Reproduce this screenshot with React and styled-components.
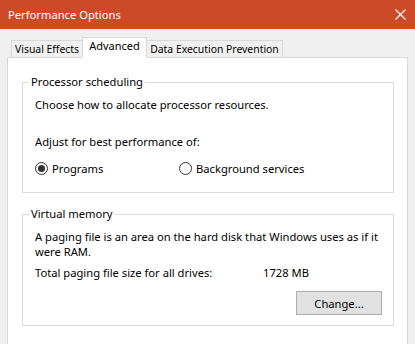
import styled, { createGlobalStyle } from 'styled-components';

const GlobalStyle = createGlobalStyle`
  html, body {
    margin: 0;
    padding: 0;
    background: #f0f0f0;
  }
  body {
    font-family: 'Noto Sans', 'Open Sans', sans-serif;
    font-size: 11.2px;
    color: #000;
  }
`;

const Window = styled.div`
  width: 415px;
  height: 344px;
  overflow: hidden;
  background: #f0f0f0;
`;

const TitleBar = styled.div`
  height: 29px;
  background: #cd4a29;
  color: #fff;
  display: flex;
  align-items: center;
  justify-content: space-between;
  padding: 0 8px;
`;

const CloseIcon = styled.svg`
  width: 11px;
  height: 11px;
  margin-right: 1px;
`;

const Body = styled.div`
  padding: 8px 7px 0 7px;
`;

const TabRow = styled.div`
  display: flex;
  align-items: flex-end;
  padding-left: 4px;
  position: relative;
  z-index: 1;
  margin-bottom: -1px;
`;

const Tab = styled.div`
  box-sizing: border-box;
  flex: none;
  width: ${({ $w }) => $w}px;
  height: ${({ $active }) => ($active ? '21px' : '18px')};
  margin: 0 ${({ $active }) => ($active ? '-1px' : '0')};
  background: ${({ $active }) => ($active ? '#fff' : '#f0f0f0')};
  border: 1px solid #d9d9d9;
  border-bottom: ${({ $active }) => ($active ? '1px solid #fff' : '1px solid #d9d9d9')};
  display: flex;
  justify-content: center;
  align-items: ${({ $active }) => ($active ? 'flex-start' : 'center')};
  font-size: ${({ $active }) => ($active ? '11px' : '10.4px')};
  line-height: 16px;
  white-space: nowrap;
  position: relative;
  z-index: ${({ $active }) => ($active ? 2 : 1)};
`;

const Panel = styled.div`
  background: #fff;
  border: 1px solid #d9d9d9;
  height: 320px;
  padding: 16px 13px 0 14px;
`;

const Group = styled.fieldset`
  margin: 0 0 ${({ $after }) => $after || 0}px 0;
  padding: 7px 11px ${({ $bottom }) => $bottom}px 12px;
  border: 1px solid #dcdcdc;
  min-width: 0;
`;

const Legend = styled.legend`
  padding: 0 2px;
  margin-left: -6px;
  line-height: 16px;
`;

const Line = styled.div`
  line-height: ${({ $lh }) => $lh || 16}px;
  margin-top: ${({ $gap }) => $gap || 0}px;
  white-space: nowrap;
`;

const RadioRow = styled.div`
  display: flex;
  align-items: center;
  margin-top: 10px;
  height: 16px;
`;

const RadioOption = styled.label`
  display: flex;
  align-items: center;
  gap: 4px;
  width: ${({ $w }) => $w}px;
`;

const RadioCircle = styled.span`
  width: 11px;
  height: 11px;
  border-radius: 50%;
  border: 1px solid #333;
  display: flex;
  align-items: center;
  justify-content: center;
  &::after {
    content: '';
    width: 7px;
    height: 7px;
    border-radius: 50%;
    background: ${({ $checked }) => ($checked ? '#333' : 'transparent')};
  }
`;

const SizeRow = styled.div`
  display: grid;
  grid-template-columns: 228px 1fr;
  line-height: 16px;
  margin-top: 6px;
`;

const ButtonRow = styled.div`
  display: flex;
  justify-content: flex-end;
  margin-top: 10px;
`;

const Button = styled.button`
  width: 86px;
  height: 24px;
  background: #e1e1e1;
  border: 1px solid #adadad;
  font-family: inherit;
  font-size: inherit;
  color: #000;
  padding: 0;
`;

const App = () => {
  return (
    <Window>
      <GlobalStyle />
      <TitleBar>
        <span>Performance Options</span>
        <CloseIcon viewBox="0 0 11 11">
          <path d="M0.5 0.5 L10.5 10.5 M10.5 0.5 L0.5 10.5" stroke="#fff" strokeWidth="1.1" fill="none" />
        </CloseIcon>
      </TitleBar>
      <Body>
        <TabRow>
          <Tab $w={72}>Visual Effects</Tab>
          <Tab $w={65} $active>Advanced</Tab>
          <Tab $w={137}>Data Execution Prevention</Tab>
        </TabRow>
        <Panel>
          <Group $bottom={16} $after={13}>
            <Legend>Processor scheduling</Legend>
            <Line>Choose how to allocate processor resources.</Line>
            <Line $gap={21}>Adjust for best performance of:</Line>
            <RadioRow>
              <RadioOption $w={144}>
                <RadioCircle $checked />
                Programs
              </RadioOption>
              <RadioOption $w={180}>
                <RadioCircle />
                Background services
              </RadioOption>
            </RadioRow>
          </Group>
          <Group $bottom={10}>
            <Legend>Virtual memory</Legend>
            <Line $lh={15}>A paging file is an area on the hard disk that Windows uses as if it</Line>
            <Line $lh={15}>were RAM.</Line>
            <SizeRow>
              <span>Total paging file size for all drives:</span>
              <span>1728 MB</span>
            </SizeRow>
            <ButtonRow>
              <Button>Change...</Button>
            </ButtonRow>
          </Group>
        </Panel>
      </Body>
    </Window>
  );
};

export default App;
